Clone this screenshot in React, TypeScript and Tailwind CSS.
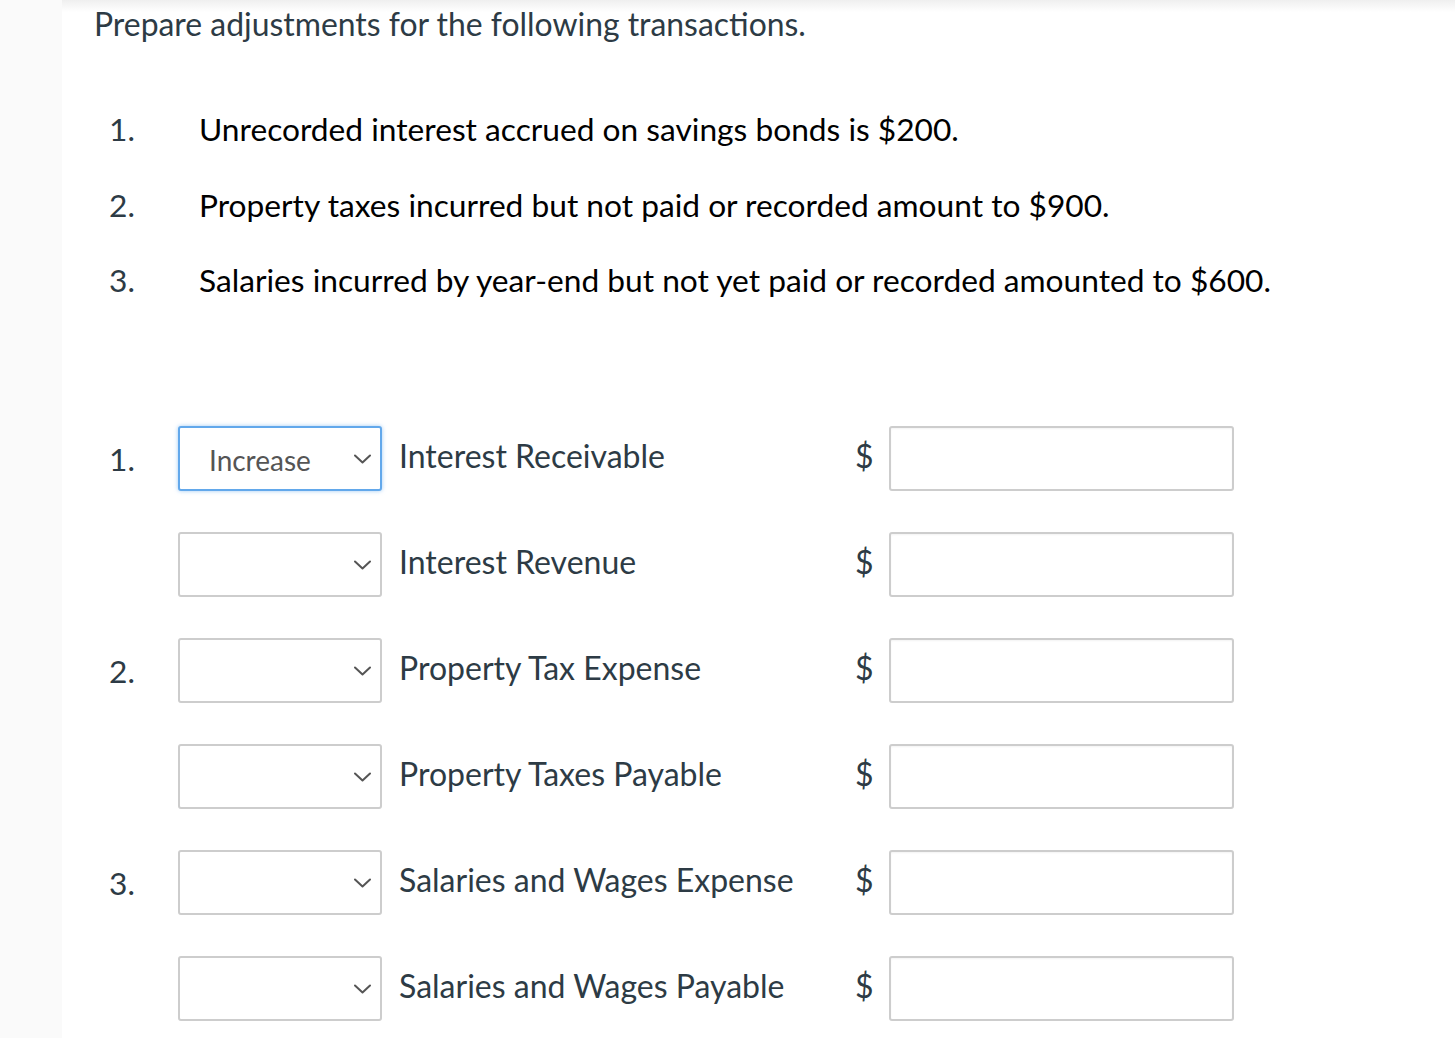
const transactions = [
  'Unrecorded interest accrued on savings bonds is $200.',
  'Property taxes incurred but not paid or recorded amount to $900.',
  'Salaries incurred by year-end but not yet paid or recorded amounted to $600.',
];

const entries = [
  { num: '1.', value: 'Increase', account: 'Interest Receivable' },
  { num: '', value: '', account: 'Interest Revenue' },
  { num: '2.', value: '', account: 'Property Tax Expense' },
  { num: '', value: '', account: 'Property Taxes Payable' },
  { num: '3.', value: '', account: 'Salaries and Wages Expense' },
  { num: '', value: '', account: 'Salaries and Wages Payable' },
];

function Chevron() {
  return (
    <svg width="17" height="10" viewBox="0 0 17 10" fill="none" className="shrink-0">
      <path d="M1 1.5l7.5 7 7.5-7" stroke="#555" strokeWidth="2" strokeLinecap="round" strokeLinejoin="round" />
    </svg>
  );
}

export default function App() {
  return (
    <div className="flex min-h-[1038px] w-full font-['Lato','Noto_Sans',sans-serif]">
      <div className="w-[62px] shrink-0 bg-[#fafafa]" />
      <div className="relative flex-1 bg-white pl-[32px]">
        {/* soft top shadow */}
        <div className="pointer-events-none absolute inset-x-0 top-0 h-[12px] bg-gradient-to-b from-[#efefef] to-white/0" />

        <h1 className="relative pt-[4px] text-[31.9px] leading-[40px] text-[#2d3b45]">
          Prepare adjustments for the following transactions.
        </h1>

        <ol className="mt-[65px] flex flex-col">
          {transactions.map((t, i) => (
            <li key={i} className="flex h-[75.5px] items-start text-[31.7px] leading-[40px]">
              <span className="w-[105px] pl-[15px] text-[#2d3b45]">{i + 1}.</span>
              <span className="text-black">{t}</span>
            </li>
          ))}
        </ol>

        <div className="mt-[90.5px] flex flex-col gap-[41px]">
          {entries.map((e, i) => (
            <div key={i} className="flex h-[65px] items-center">
              <span className="w-[84px] pl-[15px] pt-[2px] text-[31.7px] text-[#2d3b45]">{e.num}</span>
              <div
                className={
                  'flex h-[65px] w-[204px] items-center rounded-[3px] border-2 bg-white pl-[29px] pr-[9px] ' +
                  (e.value ? 'border-[#62a8eb] shadow-[0_0_4px_rgba(98,168,235,0.6)]' : 'border-[#cdcdcd]')
                }
              >
                <span className="flex-1 pt-[2px] text-[28px] text-[#555]">{e.value}</span>
                <Chevron />
              </div>
              <span className="ml-[17px] w-[456px] pb-[6px] text-[32px] text-[#2d3b45]">{e.account}</span>
              <span className="w-[34px] pb-[6px] text-[32px] text-[#2d3b45]">$</span>
              <div className="h-[65px] w-[345px] rounded-[3px] border-2 border-[#cdcdcd] bg-white shadow-[inset_0_1px_2px_rgba(0,0,0,0.05)]" />
            </div>
          ))}
        </div>
      </div>
    </div>
  );
}
